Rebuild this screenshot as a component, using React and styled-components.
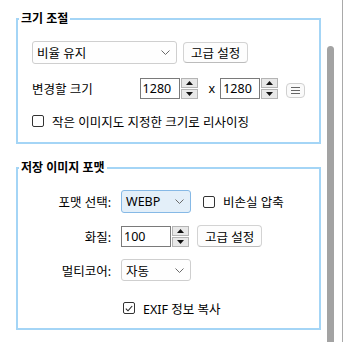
import React from 'react';
import styled, { createGlobalStyle } from 'styled-components';

const GlobalStyle = createGlobalStyle`
  html, body {
    margin: 0;
    padding: 0;
    background: #ffffff;
  }
  body {
    font-family: "Noto Sans", "Noto Sans CJK KR", sans-serif;
    font-size: 12.5px;
    color: #000000;
  }
`;

const Window = styled.div`
  display: flex;
  width: 343px;
  height: 342px;
  overflow: hidden;
`;

const Content = styled.div`
  width: 327px;
  padding: 10px 6px 0 16px;
  box-sizing: border-box;
`;

const Scrollbar = styled.div`
  width: 16px;
  padding-top: 46px;
  border-right: 1px solid #a9a9a9;
  box-sizing: border-box;
`;

const Thumb = styled.div`
  width: 7px;
  height: 100%;
  background: #a3a3a3;
  border-radius: 4px 4px 0 0;
`;

const Group = styled.fieldset`
  width: 305px;
  min-width: 0;
  box-sizing: border-box;
  margin: 0 0 ${p => p.$gap || 0}px;
  padding: 0;
  border: 2px solid #a4d5f6;
`;

const Legend = styled.legend`
  margin-left: 1px;
  padding: 0 2px;
  font-weight: 700;
  font-size: 12px;
  line-height: 18px;
`;

const Stack = styled.div`
  display: flex;
  flex-direction: column;
  gap: 13px;
  padding: 13px 14px 13px;
`;

const Row = styled.div`
  display: flex;
  align-items: center;
  height: ${p => p.$h || 23}px;
`;

const Combo = styled.div`
  display: flex;
  align-items: center;
  justify-content: space-between;
  width: ${p => p.$w}px;
  height: ${p => p.$h || 23}px;
  box-sizing: border-box;
  padding: 0 6px 0 4px;
  border: 1px solid ${p => (p.$hover ? '#86b9e6' : '#cfcfcf')};
  border-radius: 3px;
  background: ${p => (p.$hover ? '#e3eff9' : '#fefefe')};
  margin-right: ${p => p.$mr || 0}px;
`;

const Button = styled.button`
  height: ${p => p.$h || 21}px;
  padding: 0 7px;
  margin-left: ${p => p.$ml || 0}px;
  font: inherit;
  color: #000000;
  background: #fdfdfd;
  border: 1px solid #d3d3d3;
  border-bottom-color: #bcbcbc;
  border-radius: 4px;
`;

const Label = styled.span`
  width: ${p => (p.$w ? `${p.$w}px` : 'auto')};
  text-align: ${p => p.$align || 'left'};
`;

const Spin = styled.div`
  display: flex;
  gap: 1px;
  height: 21px;
`;

const SpinInput = styled.div`
  display: flex;
  align-items: center;
  width: ${p => p.$w}px;
  box-sizing: border-box;
  padding-left: 2px;
  border: 1px solid #7a7a7a;
  background: #ffffff;
`;

const Arrows = styled.div`
  display: flex;
  flex-direction: column;
  gap: 1px;
  width: 17px;
`;

const Arrow = styled.div`
  flex: 1;
  display: flex;
  align-items: center;
  justify-content: center;
  border: 1px solid #b4b4b4;
  background: #e8e8e8;
`;

const Times = styled.span`
  margin: 0 5px 0 11px;
`;

const MenuButton = styled.div`
  display: flex;
  align-items: center;
  justify-content: center;
  width: 19px;
  height: 15px;
  margin: 4px 0 0 8px;
  box-sizing: border-box;
  border: 1px solid #d0d0d0;
  border-radius: 4px;
  background: #fafafa;
`;

const Check = styled.label`
  display: flex;
  align-items: center;
  gap: 8px;
  height: 16px;
`;

const Box = styled.span`
  display: inline-flex;
  align-items: center;
  justify-content: center;
  width: 12px;
  height: 12px;
  box-sizing: border-box;
  border: 1px solid #333333;
  border-radius: 2px;
  background: #ffffff;
`;

const Form = styled.div`
  display: grid;
  grid-template-columns: 79px auto;
  column-gap: 10px;
  row-gap: 12px;
  align-items: center;
  padding: 13px 14px 12px;
`;

const Controls = styled.div`
  display: flex;
  align-items: center;
  height: ${p => p.$h || 23}px;
  margin-top: ${p => p.$mt || 0}px;
  padding-left: ${p => p.$pl || 0}px;
`;

const Chevron = () => (
  <svg width="9" height="5" viewBox="0 0 9 5">
    <polyline points="0.5,0.5 4.5,4.5 8.5,0.5" fill="none" stroke="#6a6a6a" strokeWidth="1" />
  </svg>
);

const Tri = ({ up }) => (
  <svg width="7" height="4" viewBox="0 0 7 4">
    <polygon points={up ? '0,4 3.5,0 7,4' : '0,0 3.5,4 7,0'} fill="#111" />
  </svg>
);

const SpinBox = ({ value, w }) => (
  <Spin>
    <SpinInput $w={w}>{value}</SpinInput>
    <Arrows>
      <Arrow><Tri up /></Arrow>
      <Arrow><Tri /></Arrow>
    </Arrows>
  </Spin>
);

const CheckBox = ({ checked, children }) => (
  <Check>
    <Box>
      {checked && (
        <svg width="8" height="7" viewBox="0 0 8 7">
          <polyline points="0.8,3.6 3,5.8 7.2,1" fill="none" stroke="#222" strokeWidth="1.1" />
        </svg>
      )}
    </Box>
    <span>{children}</span>
  </Check>
);

const App = () => (
  <Window>
    <GlobalStyle />
    <Content>
      <Group $gap={15}>
        <Legend>크기 조절</Legend>
        <Stack>
          <Row>
            <Combo $w={145} $mr={6}>
              <span>비율 유지</span>
              <Chevron />
            </Combo>
            <Button>고급 설정</Button>
          </Row>
          <Row>
            <Label $w={109}>변경할 크기</Label>
            <SpinBox value="1280" w={40} />
            <Times>x</Times>
            <SpinBox value="1280" w={40} />
            <MenuButton>
              <svg width="11" height="7" viewBox="0 0 11 7">
                <path d="M1 0.5H10M1 3.5H10M1 6.5H10" stroke="#666" strokeWidth="1" />
              </svg>
            </MenuButton>
          </Row>
          <Row $h={16}>
            <CheckBox>작은 이미지도 지정한 크기로 리사이징</CheckBox>
          </Row>
        </Stack>
      </Group>

      <Group>
        <Legend>저장 이미지 포맷</Legend>
        <Form>
          <Label $align="right">포맷 선택:</Label>
          <Controls>
            <Combo $w={70} $hover $mr={12}>
              <span>WEBP</span>
              <Chevron />
            </Combo>
            <CheckBox>비손실 압축</CheckBox>
          </Controls>

          <Label $align="right">화질:</Label>
          <Controls $h={22}>
            <SpinBox value="100" w={50} />
            <Button $h={22} $ml={8}>고급 설정</Button>
          </Controls>

          <Label $align="right">멀티코어:</Label>
          <Controls $h={22}>
            <Combo $w={70} $h={22}>
              <span>자동</span>
              <Chevron />
            </Combo>
          </Controls>

          <span />
          <Controls $h={16} $mt={7} $pl={2}>
            <CheckBox checked>EXIF 정보 복사</CheckBox>
          </Controls>
        </Form>
      </Group>
    </Content>
    <Scrollbar>
      <Thumb />
    </Scrollbar>
  </Window>
);

export default App;
